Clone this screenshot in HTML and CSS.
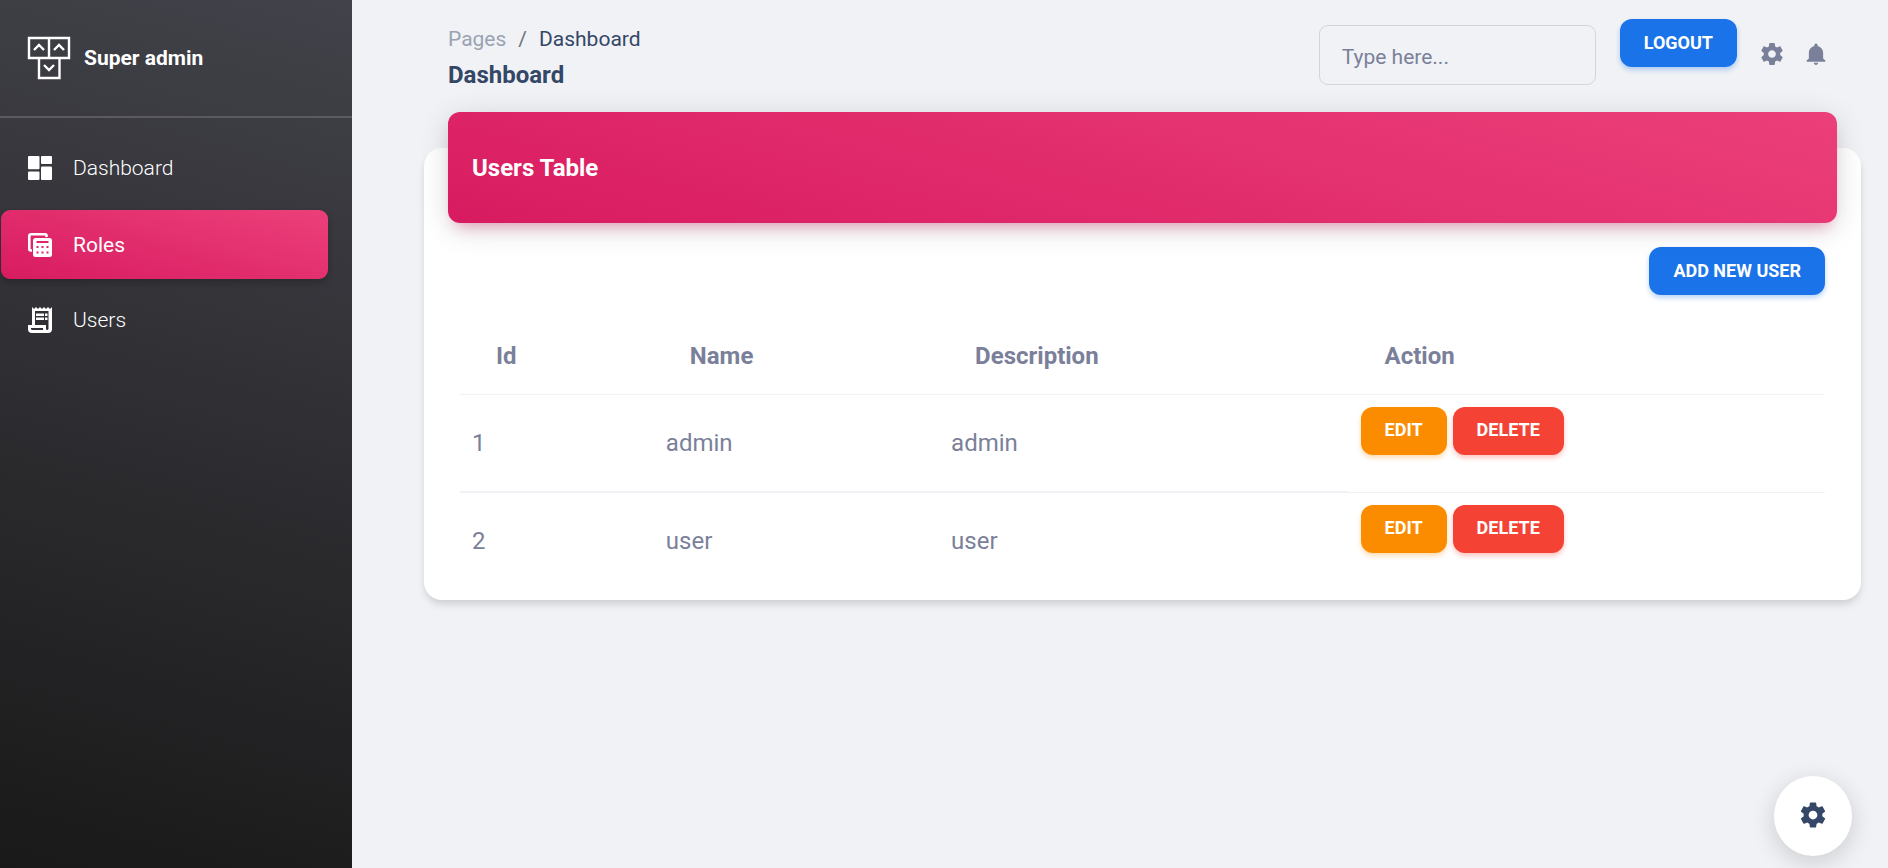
FILE: index.html
```html
<!DOCTYPE html>
<html lang="en">
<head>
<meta charset="utf-8">
<meta name="viewport" content="width=device-width, initial-scale=1">
<title>Dashboard</title>
<link rel="stylesheet" href="styles.css">
</head>
<body>
<svg class="defs" aria-hidden="true">
  <symbol id="gear" viewBox="0 0 24 24"><path d="M19.430 12.980c.04-.32.07-.64.07-.98s-.03-.66-.07-.98l2.110-1.650c.19-.15.24-.42.12-.64l-2-3.460c-.12-.22-.39-.3-.61-.22l-2.490 1c-.52-.4-1.080-.73-1.690-.98l-.38-2.650C14.460 2.180 14.250 2 14 2h-4c-.25 0-.46.18-.49.42l-.38 2.650c-.61.25-1.170.59-1.690.98l-2.490-1c-.23-.09-.49 0-.61.22l-2 3.460c-.13.22-.07.49.12.64l2.110 1.650c-.04.32-.07.65-.07.98s.03.66.07.98l-2.110 1.650c-.19.15-.24.42-.12.64l2 3.460c.12.22.39.3.61.22l2.490-1c.52.4 1.080.73 1.690.98l.38 2.650c.03.24.24.42.49.42h4c.25 0 .46-.18.49-.42l.38-2.650c.61-.25 1.170-.59 1.690-.98l2.490 1c.23.09.49 0 .61-.22l2-3.460c.12-.22.07-.49-.12-.64l-2.110-1.650zM12 15.500c-1.930 0-3.500-1.570-3.500-3.500s1.570-3.500 3.500-3.500 3.500 1.570 3.500 3.500-1.570 3.500-3.500 3.500z"/></symbol>
</svg>
<div class="layout">
  <aside class="sidebar">
    <a class="brand" href="#">
      <svg class="brand-logo" viewBox="0 0 44 44" aria-hidden="true"><path d="M2 2h20v20H2zM22 2h20v20H22zM12 22h20.500v20H12z"/><path d="M7 14l5-5 5 5M27 14l5-5 5 5M17 29l5 5 5-5"/></svg>
      <span>Super admin</span>
    </a>
    <nav class="menu">
      <a class="menu-link" href="#">
        <svg class="menu-icon" viewBox="0 0 24 24" aria-hidden="true"><rect x="0" y="0" width="11.500" height="13.300" rx="1"/><rect x="13" y="0" width="11" height="8" rx="1"/><rect x="0" y="15.500" width="11.500" height="8.500" rx="1"/><rect x="13" y="10.500" width="11" height="13.500" rx="1"/></svg>
        <span>Dashboard</span>
      </a>
      <a class="menu-link active" href="#">
        <svg class="menu-icon" viewBox="0 0 24 24" aria-hidden="true"><path d="M18.500 4V2.500Q18.500 1.300 17.300 1.300H3Q1.300 1.300 1.300 3V16Q1.300 17.500 3 17.500H4" fill="none" stroke="currentColor" stroke-width="2.600"/><path fill-rule="evenodd" d="M7.500 5h14Q24 5 24 7.500v14Q24 24 21.500 24h-14Q5 24 5 21.500v-14Q5 5 7.500 5zM8.500 8v2h12V8zM8.500 13v2h2v-2zM13.500 13v2h2v-2zM18.500 13v2h2v-2zM8.500 18.500v2h2v-2zM13.500 18.500v2h2v-2zM18.500 18.500v2h2v-2z"/></svg>
        <span>Roles</span>
      </a>
      <a class="menu-link" href="#">
        <svg class="menu-icon tall" viewBox="0 0 24 26" aria-hidden="true"><path d="M4 0l2 2 2-2 2 2 2-2 2 2 2-2 2 2 2-2 2 2 2-2v22q0 4-4 4H4q-4 0-4-4v-4h4zM7 4v14h11v4q0 1 1 1t1.500-1V4zM3 21v1q0 1 1.500 1H15v-2z" fill-rule="evenodd"/><path d="M8 6.500h8v2.500H8zM17 6.500h2.500v2.500H17zM8 10.500h8V13H8zM17 10.500h2.500V13H17z"/></svg>
        <span>Users</span>
      </a>
    </nav>
  </aside>
  <main class="main">
    <header class="topbar">
      <div class="heading">
        <nav class="crumbs" aria-label="Breadcrumb"><a href="#">Pages</a><span class="slash">/</span><span>Dashboard</span></nav>
        <h1>Dashboard</h1>
      </div>
      <div class="tools">
        <input class="search" type="text" placeholder="Type here..." aria-label="Search">
        <button class="btn btn-blue logout" type="button">Logout</button>
        <button class="tool-btn" type="button" aria-label="Settings"><svg viewBox="2 2 20 20"><use href="#gear" width="24" height="24"/></svg></button>
        <button class="tool-btn" type="button" aria-label="Notifications"><svg viewBox="2 2 20 20"><path d="M12 22c1.100 0 2-.9 2-2h-4c0 1.100.89 2 2 2zm6.500-6v-5c0-3.070-1.940-5.640-5-6.320V4c0-.83-.67-1.500-1.500-1.500s-1.500.67-1.500 1.500v.68C7.430 5.360 5.500 7.920 5.500 11v5l-2 2v1h17v-1l-2-2z"/></svg></button>
      </div>
    </header>
    <section class="card">
      <h2 class="card-title">Users Table</h2>
      <div class="card-body">
        <div class="actions"><button class="btn btn-blue" type="button">Add new user</button></div>
        <table class="table">
          <colgroup><col class="col-id"><col class="col-name"><col class="col-desc"><col></colgroup>
          <thead><tr><th>Id</th><th>Name</th><th>Description</th><th>Action</th></tr></thead>
          <tbody>
            <tr><td>1</td><td>admin</td><td>admin</td><td><div class="row-actions"><button class="btn btn-orange" type="button">Edit</button><button class="btn btn-red" type="button">Delete</button></div></td></tr>
            <tr><td>2</td><td>user</td><td>user</td><td><div class="row-actions"><button class="btn btn-orange" type="button">Edit</button><button class="btn btn-red" type="button">Delete</button></div></td></tr>
          </tbody>
        </table>
      </div>
    </section>
  </main>
</div>
<button class="fab" type="button" aria-label="Configure"><svg viewBox="0 0 24 24"><use href="#gear"/></svg></button>
</body>
</html>
```
FILE: styles.css
```css
* { box-sizing: border-box; }
body {
  margin: 0;
  background: #f0f2f5;
  color: #7b809a;
  font-family: Roboto, "Liberation Sans", sans-serif;
  font-size: 24px;
  line-height: 36px;
}
a { color: inherit; text-decoration: none; }
button, input { font-family: inherit; }
svg { display: block; fill: currentColor; }
.defs { position: absolute; width: 0; height: 0; }
.layout { display: flex; min-height: 100vh; }

.sidebar {
  flex: 0 0 352px;
  background: linear-gradient(195deg, #42424a, #191919);
  color: #fff;
  font-size: 21px;
}
.brand {
  display: flex;
  align-items: center;
  gap: 13px;
  height: 118px;
  padding: 0 27px;
  border-bottom: 2px solid #5a5a60;
  font-weight: 700;
}
.brand-logo { width: 44px; height: 44px; fill: none; stroke: currentColor; stroke-width: 2.4; }
.menu { display: flex; flex-direction: column; gap: 6px; padding: 15px 24px 0 1px; }
.menu-link {
  display: flex;
  align-items: center;
  gap: 21px;
  height: 69px;
  padding: 0 27px;
  border-radius: 9px;
  font-weight: 300;
}
.menu-link.active {
  margin-top: 2px;
  font-weight: 400;
  background: linear-gradient(195deg, #ec407a, #d81b60);
  box-shadow: 0 4px 9px -1px rgba(0, 0, 0, .15), 0 3px 6px -1px rgba(0, 0, 0, .1);
}
.menu-icon { width: 24px; height: 24px; }
.menu-icon.tall { height: 26px; }

.main { flex: 1; min-width: 0; padding: 19px 27px 24px 72px; }
.topbar { display: flex; justify-content: space-between; height: 93px; padding: 0 34px 0 24px; }
.heading { padding-top: 4px; }
.crumbs { display: flex; gap: 12px; color: #344767; font-size: 21px; line-height: 32px; font-weight: 400; }
.crumbs a { color: #9aa3b3; }
.slash { color: #6c757d; }
h1, h2 { margin: 0; font-size: 24px; font-weight: 700; }
h1 { color: #344767; line-height: 40px; }
.tools { display: flex; align-items: flex-start; }
.search {
  width: 277px;
  height: 60px;
  margin: 6px 24px 0 0;
  padding: 4px 22px 0;
  border: 1px solid #d2d6da;
  border-radius: 9px;
  background: none;
  color: #495057;
  font-size: 21px;
}
.search::placeholder { color: #7b809a; opacity: 1; }
.tool-btn { margin-top: 24px; padding: 0; border: 0; background: none; color: #7b809a; }
.tool-btn + .tool-btn { margin-left: 22px; }
.tool-btn svg { width: 22px; height: 22px; }

.btn {
  height: 48px;
  padding: 0 24px 2px;
  border: 0;
  border-radius: 12px;
  color: #fff;
  font-size: 18px;
  font-weight: 700;
  text-transform: uppercase;
}
.btn-blue { background: #1a73e8; box-shadow: 0 3px 5px rgba(26, 115, 232, .3); }
.btn-orange { background: #fb8c00; box-shadow: 0 3px 5px rgba(251, 140, 0, .3); }
.btn-red { background: #f44335; box-shadow: 0 3px 5px rgba(244, 67, 53, .3); }
.logout { margin-right: 24px; }

.card {
  display: flow-root;
  margin-top: 36px;
  padding: 0 24px 12px;
  border-radius: 18px;
  background: #fff;
  box-shadow: 0 6px 9px -1px rgba(0, 0, 0, .1), 0 3px 6px -1px rgba(0, 0, 0, .06);
}
.card-title {
  position: relative;
  margin-top: -36px;
  padding: 38px 24px 36px;
  border-radius: 12px;
  background: linear-gradient(195deg, #ec407a, #d81b60);
  box-shadow: 0 6px 30px rgba(0, 0, 0, .14), 0 10px 15px -8px rgba(233, 30, 99, .4);
  color: #fff;
  line-height: 37px;
}
.card-body { padding: 24px 12px 0; }
.actions { display: flex; justify-content: flex-end; margin-bottom: 24px; }
.table { width: 100%; table-layout: fixed; border-collapse: collapse; }
.col-id { width: 14.2%; }
.col-name { width: 20.9%; }
.col-desc { width: 30%; }
th { height: 75px; padding: 0 36px; border-bottom: 1px solid #f0f2f5; text-align: left; font-weight: 700; }
td { height: 98px; padding: 0 12px; vertical-align: middle; }
td:last-child { padding-top: 12px; vertical-align: top; }
tbody tr:first-child td { border-bottom: 2px solid #f0f2f5; }
tbody tr:first-child td:last-child { border-bottom-width: 1px; }
tbody tr:last-child td { height: 96px; }
.row-actions { display: flex; gap: 6px; }

.fab {
  position: fixed;
  right: 36px;
  bottom: 12px;
  display: grid;
  place-items: center;
  width: 78px;
  height: 80px;
  padding: 0 0 2px;
  border: 0;
  border-radius: 50%;
  background: #fff;
  color: #344767;
  box-shadow: 0 6px 24px rgba(0, 0, 0, .16);
}
.fab svg { width: 30px; height: 30px; }
```
